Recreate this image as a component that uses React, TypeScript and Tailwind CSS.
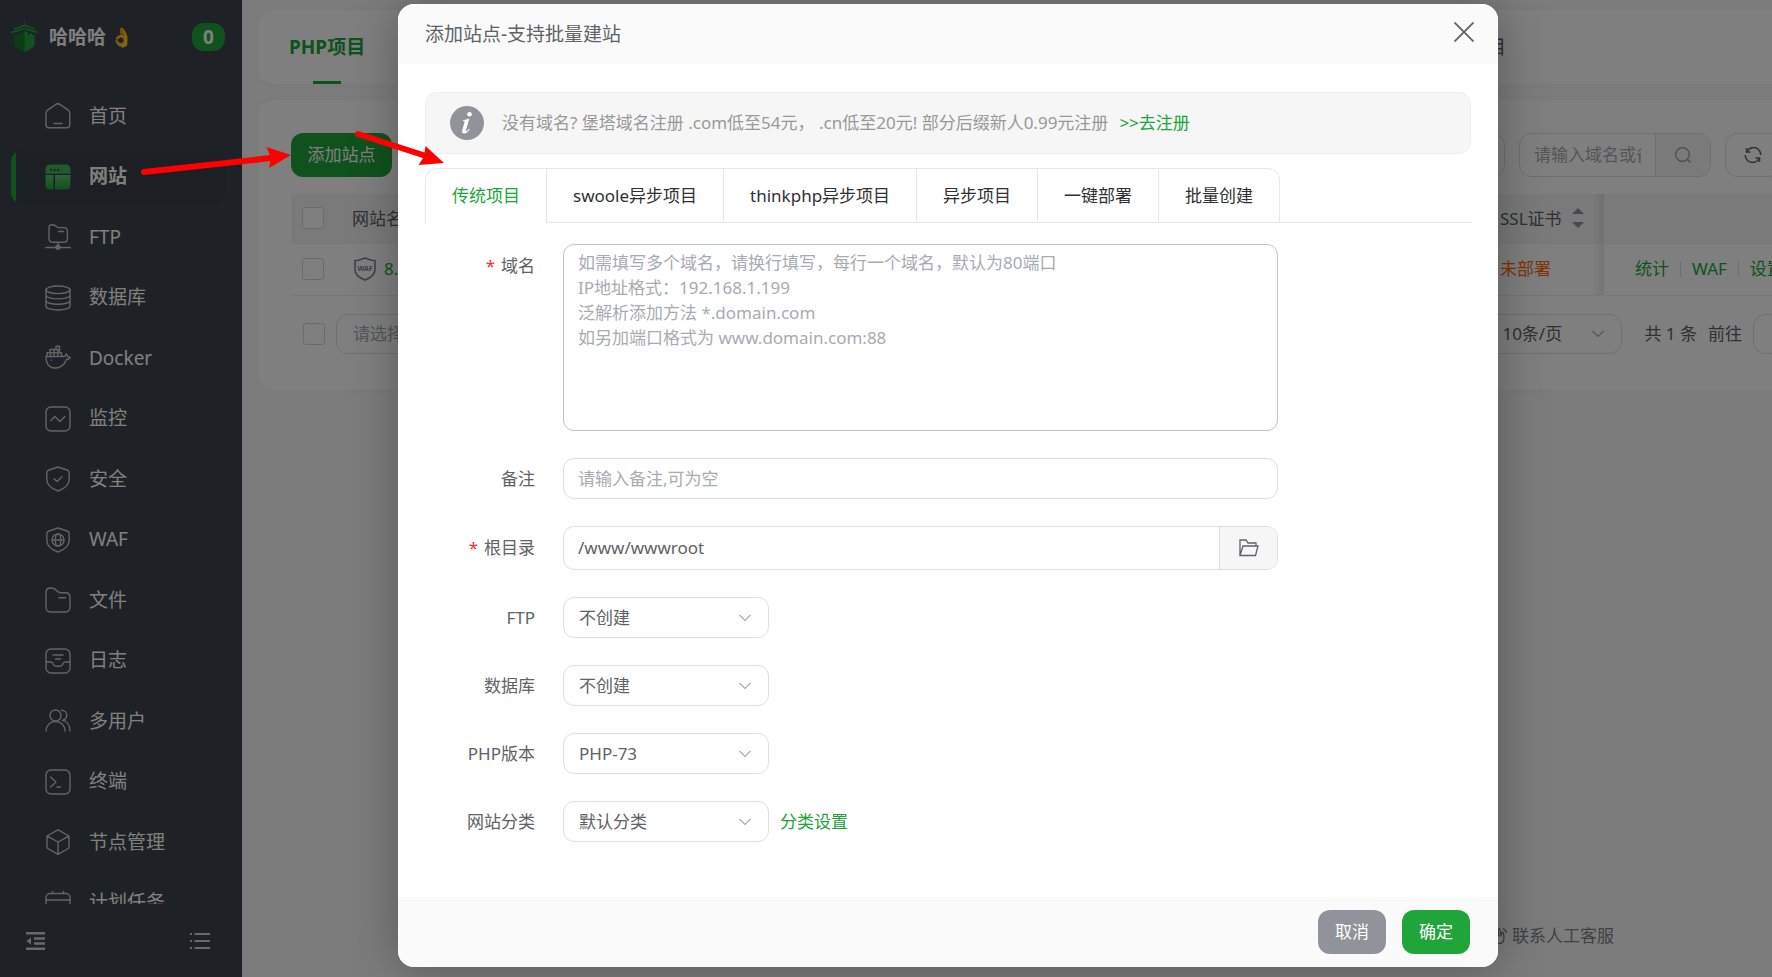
import type { ReactNode } from 'react';
import { useState } from 'react';
import { clsx } from 'clsx';

const GREEN = '#20a53a';

type IconProps = { children: ReactNode };

function MenuIcon({ children }: IconProps) {
  return (
    <svg
      className="h-[26px] w-[26px] shrink-0 text-[#c4c7ca]"
      viewBox="0 0 26 26"
      fill="none"
      stroke="currentColor"
      strokeWidth="1.4"
      strokeLinecap="round"
      strokeLinejoin="round"
    >
      {children}
    </svg>
  );
}

const menuItems = [
  {
    label: '首页',
    icon: (
      <>
        <path d="M1 10.2c0-1.500.6-2.600 1.800-3.400L11 1.300c1.200-.8 2.600-.8 3.800 0l8.200 5.500c1.200.8 1.800 1.900 1.800 3.400v11.600c0 2-1 3-3 3H4c-2 0-3-1-3-3z" />
        <path d="M9 20.500h8" />
      </>
    ),
  },
  {
    label: '网站',
    icon: (
      <g stroke="none">
        <defs>
          <linearGradient id="site" x1="0" y1="0" x2="0" y2="1">
            <stop offset="0" stopColor="#5ec274" />
            <stop offset="1" stopColor={GREEN} />
          </linearGradient>
        </defs>
        <path d="M.5 9.700V6c0-3.800 1.700-5.500 5.500-5.500h14c3.800 0 5.500 1.700 5.500 5.500v3.700z" fill="#45b45e" />
        <path d="M.5 11h8v14.500H6C2.200 25.500.5 23.800.5 20z" fill="url(#site)" />
        <path d="M10 11h15.500v9c0 3.800-1.700 5.500-5.500 5.500H10z" fill="url(#site)" />
        <path d="M5 5h2v2H5zM8.600 5h2v2h-2zM12.200 5h2v2h-2z" fill="#3c444c" />
      </g>
    ),
  },
  {
    label: 'FTP',
    icon: (
      <>
        <path d="M4 3.500C4 1.500 5 .7 7 .7c2.800 0 3.600.5 4.700 1.900.6.8 1.200 1 2.300 1h4.600c2.600 0 3.800 1 3.800 3.500v7.400c0 2.600-1.200 3.800-3.800 3.800H8c-2.700 0-4-1.200-4-3.800z" />
        <path d="M13.500 7.500h5M13 18.500v3M.8 23.500h24.500" />
        <circle cx="13" cy="23.300" r="2" fill="currentColor" />
      </>
    ),
  },
  {
    label: '数据库',
    icon: (
      <>
        <ellipse cx="13" cy="4.800" rx="12" ry="3.800" />
        <path d="M1 4.800v16.400C1 23.300 6.400 25 13 25s12-1.700 12-3.800V4.800M1 10.300c0 2 5.400 3.600 12 3.600s12-1.600 12-3.600M1 15.700c0 2 5.400 3.600 12 3.600s12-1.600 12-3.600" />
      </>
    ),
  },
  {
    label: 'Docker',
    icon: (
      <>
        <path d="M1 11.500h18.200c1.300 0 1.600-.8 1.800-2.800.8.600 1.500 1.500 1.700 2.900.9 0 1.800.2 2.600.9-.9 1.300-2.200 2-3.900 2-2 5-5.600 8.500-11 8.500-6 0-9.400-3.700-9.400-11.500z" />
        <path d="M2 11V7.800h14.500V11M5 7.800V4.500h9.500v3.300M11 4.500V1.300h3.500v3.200M5.500 7.800V11M9 4.500V11M12.800 4.500V11" />
        <path d="M6.500 15v.3" />
      </>
    ),
  },
  {
    label: '监控',
    icon: (
      <>
        <rect x="1" y="1" width="24" height="24" rx="5" />
        <path d="M6 14.500l3.800-4 3.200 3 2 2 4.800-5" />
      </>
    ),
  },
  {
    label: '安全',
    icon: (
      <>
        <path d="M13 1l9 3c1.500.5 2.200 1.300 2.200 3v6c0 6-4.700 9.700-11.200 12C6.500 22.700 1.800 19 1.800 13V7c0-1.700.7-2.500 2.200-3z" />
        <path d="M9 12.800l3 2.700 5-4.800" />
      </>
    ),
  },
  {
    label: 'WAF',
    icon: (
      <>
        <path d="M13 1l9 3c1.500.5 2.200 1.300 2.200 3v6c0 6-4.700 9.700-11.200 12C6.500 22.700 1.800 19 1.800 13V7c0-1.700.7-2.500 2.200-3z" />
        <circle cx="13" cy="13" r="6" />
        <ellipse cx="13" cy="13" rx="2.700" ry="6" />
        <path d="M7 13h12" />
      </>
    ),
  },
  {
    label: '文件',
    icon: (
      <>
        <path d="M1 5.500C1 2.300 2.600 1 5.500 1c3.500 0 4.500.6 6 2.500 1.600 2 2 2.300 4.500 2.300h4.500c3 0 4.500 1.500 4.500 4.500v9.700c0 3.500-1.500 5-5 5H6c-3.500 0-5-1.500-5-5z" />
        <path d="M14 10.700h6.500" />
      </>
    ),
  },
  {
    label: '日志',
    icon: (
      <>
        <rect x="1" y="1" width="24" height="24" rx="5" />
        <path d="M8 7h10M10.500 11h5M1 14h5c1 0 1.400.6 1.900 1.700.6 1.500 1.400 2.500 3 2.500h4.200c1.600 0 2.400-1 3-2.500.5-1.100.9-1.700 1.900-1.700h5" />
      </>
    ),
  },
  {
    label: '多用户',
    icon: (
      <>
        <circle cx="10.500" cy="7.500" r="5.500" />
        <path d="M1 23c0-5.500 4-9.500 9.500-9.500s9.500 4 9.500 9.500M16.500 2.300c3 0 5.200 2.200 5.200 5 0 2.600-1.800 4.400-4.200 5 4.500.8 7.500 5 7.500 10.700" />
      </>
    ),
  },
  {
    label: '终端',
    icon: (
      <>
        <rect x="1" y="1" width="24" height="24" rx="5" />
        <path d="M5.500 8l5.500 5-5.500 5M12 18h3.500" />
      </>
    ),
  },
  {
    label: '节点管理',
    icon: (
      <path d="M13 .8L24 7v12l-11 6.300L2 19V7zM2.300 7.200L13 13l10.700-5.800M13 13v12" />
    ),
  },
  {
    label: '计划任务',
    icon: (
      <>
        <rect x="1" y="3.500" width="24" height="21" rx="4" />
        <path d="M1 10h24M7.500 1.500v2M18.500 1.500v2M7 14.800h.1M13 14.800h.1M19 14.800h.1" />
      </>
    ),
  },
];

const modalTabs = ['传统项目', 'swoole异步项目', 'thinkphp异步项目', '异步项目', '一键部署', '批量创建'];

const domainPlaceholder = [
  '如需填写多个域名，请换行填写，每行一个域名，默认为80端口',
  'IP地址格式：192.168.1.199',
  '泛解析添加方法 *.domain.com',
  '如另加端口格式为 www.domain.com:88',
].join('\n');

function Chevron() {
  return (
    <svg
      className="pointer-events-none absolute top-1/2 right-[18px] h-2 w-3 -translate-y-1/2 text-[#a8abb2]"
      viewBox="0 0 12 8"
      fill="none"
      stroke="currentColor"
      strokeWidth="1.2"
    >
      <path d="M.5 1L6 6.500 11.500 1" />
    </svg>
  );
}

function Sidebar() {
  return (
    <aside className="flex w-[242px] shrink-0 flex-col bg-[#3c444c] text-[19px] text-white">
      <div className="flex h-[86px] shrink-0 items-start pt-[22px] pr-[17px] pl-[11px]">
        <svg className="h-[30px] w-[27px]" viewBox="0 0 27 30">
          <path d="M13.500 0l.8 2.800L24 6.200l-.6 1.600-9.900-3.300-9.900 3.300L3 6.200l9.700-3.400z" fill={GREEN} />
          <path d="M13.500 5.800L26.500 9.600 27 11.400 13.500 7.600 0 11.400l.5-1.800z" fill={GREEN} />
          <path d="M3.500 13h2.200v-1.600h2.600v1h2V9.600h3.200V30L6 26c-1.700-1-2.500-2.300-2.500-4z" fill="#167a2a" />
          <path d="M23.500 13h-2.200v-1.600h-2.600v1h-2V9.600h-3.200V30l7.500-4c1.700-1 2.500-2.300 2.500-4z" fill={GREEN} />
        </svg>
        <span className="ml-[11px] leading-[30px] font-bold">哈哈哈</span>
        <span className="ml-1 leading-[30px]">👌</span>
        <span className="mt-px ml-auto h-7 w-[33px] rounded-xl bg-[#20a53a] text-center leading-7 font-bold">0</span>
      </div>

      <nav className="min-h-0 flex-1 overflow-hidden">
        <ul>
          {menuItems.map(({ label, icon }) => {
            const active = label === '网站';
            return (
              <li key={label} className="flex h-[60px] items-center px-[11px] even:h-[61px]">
                <a
                  href="#"
                  className={clsx(
                    'flex h-[54px] w-[214px] items-center overflow-hidden rounded-xl',
                    active && 'bg-[#393f46] font-bold',
                  )}
                >
                  <span className={clsx('mr-[29px] h-full w-[5px]', active && 'bg-[#20a53a]')} />
                  <MenuIcon>{icon}</MenuIcon>
                  <span className="ml-[18px]">{label}</span>
                </a>
              </li>
            );
          })}
        </ul>
      </nav>

      <div className="flex h-[73px] shrink-0 items-center justify-between pr-8 pl-[26px]">
        <button aria-label="收起菜单">
          <svg className="h-[18px] w-[19px]" viewBox="0 0 19 18" fill="#d0d2d4">
            <path d="M0 0h19v2.500H0zM8 5.200h11v2.500H8zM8 10.200h11v2.500H8zM0 15.500h19V18H0zM5 5.500v7L.5 9z" />
          </svg>
        </button>
        <button aria-label="菜单列表">
          <svg className="h-[18px] w-5" viewBox="0 0 20 18" fill="#d0d2d4">
            <path d="M0 1h2v2H0zM4.500 1H20v2H4.500zM0 8h2v2H0zM4.500 8H20v2H4.500zM0 15h2v2H0zM4.500 15H20v2H4.500z" />
          </svg>
        </button>
      </div>
    </aside>
  );
}

function CheckBox({ label }: { label: string }) {
  return (
    <input
      type="checkbox"
      aria-label={label}
      className="block h-[22px] w-[22px] appearance-none rounded-[3px] border border-[#d4d7de] bg-white"
    />
  );
}

function SiteList() {
  return (
    <main className="flex flex-1 flex-col bg-[#f7f9f7] px-4 pt-[10px] text-[17px] text-[#606266]">
      <div className="flex h-[74px] justify-between rounded-2xl bg-white pr-[374px] pl-[31px] text-[19px] shadow-[0_0_10px_rgba(0,0,0,0.04)]">
        <button className="flex flex-col items-center pt-[23px] font-bold text-[#20a53a]">
          <span className="leading-7">PHP项目</span>
          <span className="mt-5 h-[3px] w-7 bg-[#20a53a]" />
        </button>
        <button>HTML项目</button>
      </div>

      <section className="mt-4 rounded-2xl bg-white px-[33px] pt-[33px] pb-9 shadow-[0_0_10px_rgba(0,0,0,0.04)]">
        <div className="flex h-11 gap-[14px]">
          <button className="mr-auto w-[101px] rounded-xl bg-[#20a53a] text-white">添加站点</button>
          <button aria-label="全部分类" className="w-[180px] rounded-xl border border-[#dcdfe6]" />
          <div className="flex w-[192px] overflow-hidden rounded-xl border border-[#dcdfe6]">
            <input
              aria-label="搜索"
              placeholder="请输入域名或备注"
              className="mr-[14px] ml-[14px] w-[107px] placeholder:text-[#a8abb2]"
            />
            <button aria-label="查询" className="flex flex-1 items-center justify-center border-l border-[#dcdfe6] bg-[#f5f5f5]">
              <svg className="h-4 w-4" viewBox="0 0 16 16" fill="none" stroke="#909399" strokeWidth="1.200">
                <circle cx="7.500" cy="7.500" r="6.800" />
                <path d="M12.500 12.500l3 3" />
              </svg>
            </button>
          </div>
          <button aria-label="刷新" className="flex w-14 items-center justify-center rounded-xl border border-[#dcdfe6]">
            <svg className="h-[18px] w-[18px]" viewBox="0 0 18 18" fill="none" stroke="#606266" strokeWidth="1.500">
              <path d="M2.500 2v4h4M2.800 5.500C5 1.200 11 .3 14.500 3.500c1.500 1.500 2.300 3.200 2.300 5.500M15.500 16v-4h-4M15.200 12.500C13 16.800 7 17.700 3.500 14.500 2 13 1.200 11.300 1.200 9" />
            </svg>
          </button>
          <button aria-label="设置" className="w-[52px] rounded-xl border border-[#dcdfe6]" />
        </div>

        <table className="mt-[17px] w-full table-fixed border-collapse text-left">
          <colgroup>
            <col className="w-[61px]" />
            <col />
            <col className="w-[120px]" />
            <col className="w-[243px]" />
          </colgroup>
          <thead>
            <tr className="h-[49px] border-b border-[#ebeef5] bg-[#f5f5f5]">
              <th className="pl-[11px]"><CheckBox label="全选" /></th>
              <th className="font-normal">网站名</th>
              <th className="bg-linear-to-r from-transparent from-90% to-black/8 pl-4 font-normal">
                <span className="flex items-center gap-[10px] whitespace-nowrap">
                  SSL证书
                  <svg className="h-5 w-3" viewBox="0 0 12 20" fill="#909399">
                    <path d="M6 0l6 6H0zM6 20l6-6H0z" />
                  </svg>
                </span>
              </th>
              <th aria-label="操作" />
            </tr>
          </thead>
          <tbody>
            <tr className="h-[52px] border-b border-[#ebeef5]">
              <td className="pl-[11px]"><CheckBox label="选择站点" /></td>
              <td>
                <a href="#" className="flex items-center gap-2 pl-[2px] text-[#20a53a]">
                  <svg className="h-6 w-[22px]" viewBox="0 0 22 24">
                    <path
                      d="M11 1l6.500 2.200 3.500.3v9c0 5-4 8.300-10 10.500C5 20.800 1 17.500 1 12.500v-9l3.500-.3z"
                      fill="none"
                      stroke="#808389"
                      strokeWidth="1.600"
                    />
                    <text x="11" y="14" textAnchor="middle" fontSize="7" fontWeight="700" fill="#808389">WAF</text>
                  </svg>
                  8.
                </a>
              </td>
              <td className="bg-linear-to-r from-transparent from-90% to-black/8 pl-4 text-[#fa6a10]">未部署</td>
              <td className="pl-[31px]">
                <span className="flex items-center gap-[11px] whitespace-nowrap text-[#20a53a]">
                  <a href="#">统计</a>
                  <i className="h-4 w-px bg-[#dcdfe6]" />
                  <a href="#">WAF</a>
                  <i className="h-4 w-px bg-[#dcdfe6]" />
                  <a href="#">设置</a>
                </span>
              </td>
            </tr>
          </tbody>
        </table>

        <div className="mt-[18px] flex h-10 items-center pl-3">
          <CheckBox label="批量选择" />
          <div className="relative ml-[11px] h-10 w-[200px]">
            <select aria-label="批量操作" className="h-full w-full appearance-none rounded-xl border border-[#dcdfe6] pl-4 text-[#a8abb2]">
              <option>请选择批量操作</option>
            </select>
            <Chevron />
          </div>
          <div className="relative ml-auto h-10 w-[140px]">
            <select aria-label="每页条数" className="h-full w-full appearance-none rounded-xl border border-[#dcdfe6] pl-[19px]">
              <option>10条/页</option>
            </select>
            <Chevron />
          </div>
          <span className="ml-[22px]">共 1 条</span>
          <label htmlFor="page" className="ml-[11px]">前往</label>
          <input id="page" className="mr-[28px] ml-[11px] h-10 w-[66px] rounded-xl border border-[#dcdfe6]" />
        </div>
      </section>

      <footer className="mt-auto flex h-[82px] items-center justify-end gap-1 pr-[266px] text-[#808389]">
        <svg className="h-[18px] w-[18px]" viewBox="0 0 18 18" fill="none" stroke="currentColor" strokeWidth="1.400">
          <path d="M3 9.500L1.500 6.500M5 13l-2-3.500c-.5-1.300 1-2 1.700-1L7 11.500 4.500 4.500c-.3-1.300 1.300-1.800 1.900-.6L9 9.500 7.800 2.600c-.1-1.300 1.600-1.500 2-.2l1.500 7 .2-3.400c.2-1.200 1.700-1.100 1.900.1.500 3.400 1.200 6-.4 8.400-2.200 3.200-6.200 2.300-8-1.500zM13 1.500c1.800.8 3 2.300 3.500 4.500" />
        </svg>
        <a href="#">联系人工客服</a>
      </footer>
    </main>
  );
}

type RowProps = { id: string; label: string; required?: boolean; children: ReactNode };

function FormRow({ id, label, required, children }: RowProps) {
  return (
    <div className="flex items-center">
      <label htmlFor={id} className="w-[110px] shrink-0 text-right leading-6">
        {required && <span className="mr-[6px] text-[#f03030]">*</span>}
        {label}
      </label>
      <div className="ml-7 flex w-[715px] items-center gap-[11px]">{children}</div>
    </div>
  );
}

function SelectBox({ id, value }: { id: string; value: string }) {
  return (
    <div className="relative h-[41px] w-[206px]">
      <select id={id} className="h-full w-full appearance-none rounded-[11px] border border-[#dcdfe6] bg-white pl-[15px]">
        <option>{value}</option>
      </select>
      <Chevron />
    </div>
  );
}

function AddSiteDialog() {
  const [tab, setTab] = useState(modalTabs[0]);

  return (
    <div
      role="dialog"
      aria-label="添加站点"
      className="relative flex min-h-[963px] w-[1100px] flex-col overflow-hidden rounded-2xl bg-white text-[17px] text-[#606266] shadow-[1px_1px_50px_rgba(0,0,0,0.3)]"
    >
      <header className="flex h-[60px] items-center justify-between bg-[#fafafa] pr-6 pl-[27px]">
        <h2 className="text-[19px]">添加站点-支持批量建站</h2>
        <button aria-label="关闭" className="mb-1 text-[#606266]">
          <svg className="h-5 w-5" viewBox="0 0 20 20" stroke="currentColor" strokeWidth="1.800">
            <path d="M.5.5l19 19M19.500.5l-19 19" />
          </svg>
        </button>
      </header>

      <div className="flex-1 px-[27px] pt-7">
        <div className="flex h-[62px] items-center rounded-xl border border-[#ebeef5] bg-[#f6f6f6] pl-6 text-[#999999]">
          <svg className="h-[34px] w-[34px]" viewBox="0 0 34 34">
            <circle cx="17" cy="17" r="17" fill="#909399" />
            <circle cx="19.500" cy="8.300" r="2.300" fill="#fff" />
            <path
              d="M13 14.200c2.200-.3 4.400-1 6.300-1.800l-3.200 11.500c-.3 1.300.2 1.500 1 .9.700-.5 1.300-1.200 1.900-2l.7.500c-1.600 2.700-3.400 4.200-5.500 4.200-1.800 0-2.600-1.200-2-3.300l2.300-8c.2-.8 0-1.100-1.600-1.200z"
              fill="#fff"
            />
          </svg>
          <p className="ml-[18px] whitespace-pre">没有域名? 堡塔域名注册 .com低至54元， .cn低至20元! 部分后缀新人0.99元注册</p>
          <a href="#" className="ml-[11px] text-[#20a53a]">&gt;&gt;去注册</a>
        </div>

        <div role="tablist" className="mt-[14px] flex h-[55px]">
          {modalTabs.map((name) => (
            <button
              key={name}
              role="tab"
              aria-selected={tab === name}
              onClick={() => setTab(name)}
              className={clsx(
                'border-t border-l border-[#e4e7ed] px-[26px] first:rounded-tl-xl last-of-type:rounded-tr-xl last-of-type:border-r',
                tab === name ? 'text-[#20a53a]' : 'border-b text-[#303133]',
              )}
            >
              {name}
            </button>
          ))}
          <div className="flex-1 border-b border-[#e4e7ed]" />
        </div>

        <form className="mt-[21px] flex flex-col gap-[27px]">
          <div className="flex">
            <label htmlFor="domain" className="w-[110px] shrink-0 pt-[10px] text-right leading-6">
              <span className="mr-[6px] text-[#f03030]">*</span>域名
            </label>
            <textarea
              id="domain"
              placeholder={domainPlaceholder}
              className="ml-7 block h-[187px] w-[715px] resize-none rounded-[11px] border border-[#c0c4cc] px-[14px] py-[5px] leading-[25px] placeholder:text-[#a8abb2]"
            />
          </div>
          <FormRow id="remark" label="备注">
            <input
              id="remark"
              placeholder="请输入备注,可为空"
              className="h-[41px] w-full rounded-[11px] border border-[#dcdfe6] px-[14px] placeholder:text-[#a8abb2]"
            />
          </FormRow>
          <FormRow id="root" label="根目录" required>
            <div className="flex h-11 w-full overflow-hidden rounded-[11px] border border-[#dcdfe6]">
              <input id="root" defaultValue="/www/wwwroot" className="flex-1 px-[14px]" />
              <button type="button" aria-label="选择目录" className="flex w-[58px] items-center justify-center border-l border-[#dcdfe6] bg-[#f6f6f6]">
                <svg className="h-[18px] w-5" viewBox="0 0 20 18" fill="none" stroke="#606266" strokeWidth="1.300">
                  <path d="M1 16.500V1h6l2 3h8v3M1 16.500L4 7h15l-2.500 9.500z" />
                </svg>
              </button>
            </div>
          </FormRow>
          <FormRow id="ftp" label="FTP">
            <SelectBox id="ftp" value="不创建" />
          </FormRow>
          <FormRow id="database" label="数据库">
            <SelectBox id="database" value="不创建" />
          </FormRow>
          <FormRow id="php" label="PHP版本">
            <SelectBox id="php" value="PHP-73" />
          </FormRow>
          <FormRow id="category" label="网站分类">
            <SelectBox id="category" value="默认分类" />
            <a href="#" className="text-[#20a53a]">分类设置</a>
          </FormRow>
        </form>
      </div>

      <footer className="flex h-[70px] items-center justify-end gap-4 bg-[#fafafa] pr-7 text-white">
        <button className="h-11 w-[68px] rounded-xl bg-[#909399]">取消</button>
        <button className="h-11 w-[68px] rounded-xl bg-[#20a53a]">确定</button>
      </footer>
    </div>
  );
}

// Red pointers that walk through the steps: menu -> button -> dialog
function GuideArrows() {
  return (
    <svg className="pointer-events-none absolute top-[120px] left-[130px] h-[70px] w-[330px]" viewBox="130 120 330 70" fill="#ff0000">
      <g stroke="#ff0000" strokeWidth="6" strokeLinecap="round">
        <path d="M144 172L271 158" />
        <path d="M358 134L426 156" />
      </g>
      <path d="M291 155L266.500 147l4.500 11-2 10z" />
      <path d="M444 163l-18.500-17-1.500 10.500-5.500 8.500z" />
    </svg>
  );
}

export default function App() {
  return (
    <div className="h-screen w-full overflow-hidden font-['Noto_Sans','Noto_Sans_CJK_SC',sans-serif]">
      <div className="relative flex h-full min-w-[1896px]">
        <Sidebar />
        <SiteList />
        <div className="absolute inset-0 flex items-start justify-center bg-black/50 pt-1">
          <AddSiteDialog />
        </div>
        <GuideArrows />
      </div>
    </div>
  );
}
